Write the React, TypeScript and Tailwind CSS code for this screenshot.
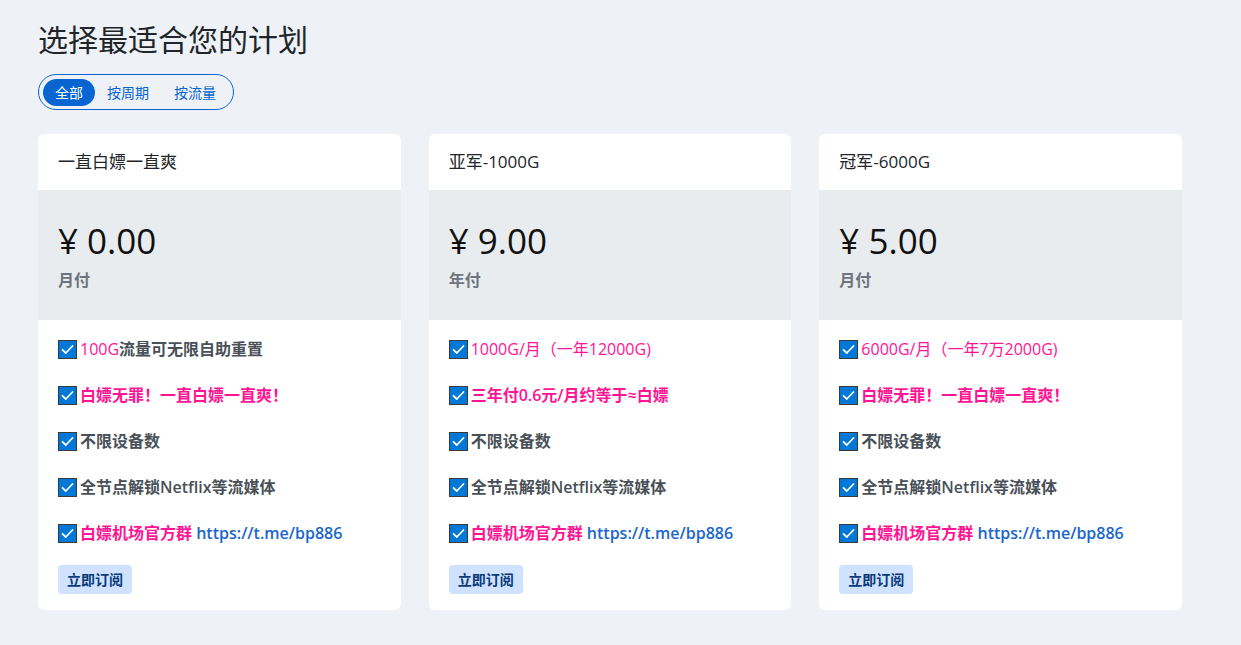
import React from "react";

type Part = { text: string; pink?: boolean; bold?: boolean; link?: boolean };
type Plan = { name: string; price: string; period: string; features: Part[][] };

const plans: Plan[] = [
  {
    name: "一直白嫖一直爽",
    price: "¥ 0.00",
    period: "月付",
    features: [
      [{ text: "100G", pink: true }, { text: "流量可无限自助重置", bold: true }],
      [{ text: "白嫖无罪！一直白嫖一直爽！", pink: true, bold: true }],
      [{ text: "不限设备数", bold: true }],
      [{ text: "全节点解锁Netflix等流媒体", bold: true }],
      [{ text: "白嫖机场官方群", pink: true, bold: true }, { text: " https://t.me/bp886", link: true, bold: true }],
    ],
  },
  {
    name: "亚军-1000G",
    price: "¥ 9.00",
    period: "年付",
    features: [
      [{ text: "1000G/月（一年12000G)", pink: true }],
      [{ text: "三年付0.6元/月约等于≈白嫖", pink: true, bold: true }],
      [{ text: "不限设备数", bold: true }],
      [{ text: "全节点解锁Netflix等流媒体", bold: true }],
      [{ text: "白嫖机场官方群", pink: true, bold: true }, { text: " https://t.me/bp886", link: true, bold: true }],
    ],
  },
  {
    name: "冠军-6000G",
    price: "¥ 5.00",
    period: "月付",
    features: [
      [{ text: "6000G/月（一年7万2000G)", pink: true }],
      [{ text: "白嫖无罪！一直白嫖一直爽！", pink: true, bold: true }],
      [{ text: "不限设备数", bold: true }],
      [{ text: "全节点解锁Netflix等流媒体", bold: true }],
      [{ text: "白嫖机场官方群", pink: true, bold: true }, { text: " https://t.me/bp886", link: true, bold: true }],
    ],
  },
];

function Check() {
  return (
    <svg width="19" height="19" viewBox="0 0 19 19" className="shrink-0">
      <rect x="0.5" y="0.5" width="18" height="18" fill="#0078d7" stroke="#3a3a3a" />
      <path d="M4.5 9.8 L7.8 13 L14.5 6" stroke="#fff" strokeWidth="1.8" fill="none" strokeLinecap="round" strokeLinejoin="round" />
    </svg>
  );
}

function Card({ plan }: { plan: Plan }) {
  return (
    <div className="bg-white rounded-md overflow-hidden flex flex-col">
      <div className="h-[56px] px-5 flex items-center text-[17px] text-[#212529]">{plan.name}</div>
      <div className="h-[130px] bg-[#e9ecef] px-5 pt-[29px]">
        <div className="text-[35px] leading-[44px] text-[#111]">{plan.price}</div>
        <div className="mt-[5px] text-[16px] font-semibold text-[#6c757d]">{plan.period}</div>
      </div>
      <div className="px-5 pt-[19px] flex flex-col gap-[26px]">
        {plan.features.map((f, i) => (
          <div key={i} className="flex items-center h-[20px] text-[16px]">
            <Check />
            <span className="ml-[3px] whitespace-nowrap">
              {f.map((p, j) => (
                <span
                  key={j}
                  className={
                    (p.link ? "text-[#1a66cc] " : p.pink ? "text-[#ff1493] " : "text-[#495057] ") +
                    (p.bold ? "font-semibold" : "font-normal")
                  }
                >
                  {p.text}
                </span>
              ))}
            </span>
          </div>
        ))}
      </div>
      <div className="px-5 pt-[22px] pb-[16px]">
        <button className="h-[29px] px-[9px] rounded bg-[#cfe2ff] text-[#0a3a7a] text-[14px] font-semibold">立即订阅</button>
      </div>
    </div>
  );
}

export default function App() {
  return (
    <div
      className="min-h-[645px] bg-[#eef2f7] px-[38px] pt-[20px]"
      style={{ fontFamily: '"Open Sans", "Noto Sans CJK SC", sans-serif' }}
    >
      <h1 className="text-[30px] leading-[40px] text-[#212529] font-normal">选择最适合您的计划</h1>
      <div className="mt-[14px] inline-flex items-center h-[36px] border border-[#0665d0] rounded-full px-[4px] text-[14px]">
        <span className="h-[27px] px-[12px] flex items-center rounded-full bg-[#0665d0] text-white">全部</span>
        <span className="px-[12px] text-[#0665d0]">按周期</span>
        <span className="px-[13px] text-[#0665d0]">按流量</span>
      </div>
      <div className="mt-[24px] grid grid-cols-3 gap-[28px] w-[1144px]">
        {plans.map((p) => (
          <Card key={p.name} plan={p} />
        ))}
      </div>
    </div>
  );
}
